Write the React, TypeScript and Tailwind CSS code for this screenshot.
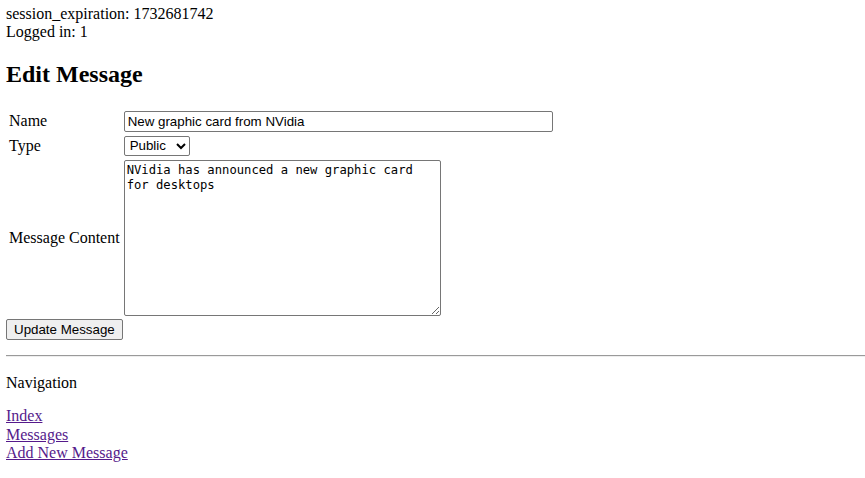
import React from "react";

export default function App() {
  return (
    <div
      className="pt-[5px] pl-[6px] text-[16px] leading-[1.15] text-black bg-white min-h-[478px]"
      style={{ fontFamily: '"Liberation Serif", "Times New Roman", serif' }}
    >
      <div>
        session_expiration: 1732681742
        <br />
        Logged in: 1
      </div>
      <h2 className="text-[24px] font-bold mt-[19.5px] mb-[19px] leading-[1.15]">Edit Message</h2>
      <form>
        <table className="border-separate border-spacing-[2px]">
          <tbody>
            <tr>
              <td className="p-[1px] align-middle">Name</td>
              <td className="p-[1px] align-middle">
                <input
                  type="text"
                  defaultValue="New graphic card from NVidia"
                  className="block w-[429px] h-[21px] px-[3px] border border-[#767676] rounded-[2px] text-[13.33px] text-black"
                  style={{ fontFamily: '"Liberation Sans", Arial, sans-serif' }}
                />
              </td>
            </tr>
            <tr>
              <td className="p-[1px] align-middle">Type</td>
              <td className="p-[1px] align-middle">
                <select
                  defaultValue="Public"
                  className="block w-[66px] h-[20px] pl-[1px] border border-[#767676] rounded-[2px] text-[13.33px] text-black bg-white"
                  style={{ fontFamily: '"Liberation Sans", Arial, sans-serif' }}
                >
                  <option>Public</option>
                  <option>Private</option>
                </select>
              </td>
            </tr>
            <tr>
              <td className="p-[1px] align-middle whitespace-nowrap">Message Content</td>
              <td className="p-[1px] align-middle">
                <textarea
                  rows={10}
                  defaultValue={"NVidia has announced a new graphic card for desktops"}
                  className="block w-[317px] h-[156px] p-[2px] border border-[#767676] rounded-[2px] text-[12.2px] leading-[15px] text-black"
                  style={{ fontFamily: '"DejaVu Sans Mono", Consolas, monospace' }}
                />
              </td>
            </tr>
          </tbody>
        </table>
        <button
          type="button"
          className="block h-[21px] px-[7px] bg-[#efefef] border border-[#767676] rounded-[2px] text-[13.33px] text-black"
          style={{ fontFamily: '"Liberation Sans", Arial, sans-serif' }}
        >
          Update Message
        </button>
      </form>
      <hr className="mt-[15px] mb-0 border-t border-t-[#9a9a9a] border-b border-b-[#eeeeee]" />
      <p className="mt-[17px] mb-[15px]">Navigation</p>
      <div>
        <a href="#" className="underline text-[#551a8b]">Index</a>
        <br />
        <a href="#" className="underline text-[#551a8b]">Messages</a>
        <br />
        <a href="#" className="underline text-[#551a8b]">Add New Message</a>
      </div>
    </div>
  );
}
